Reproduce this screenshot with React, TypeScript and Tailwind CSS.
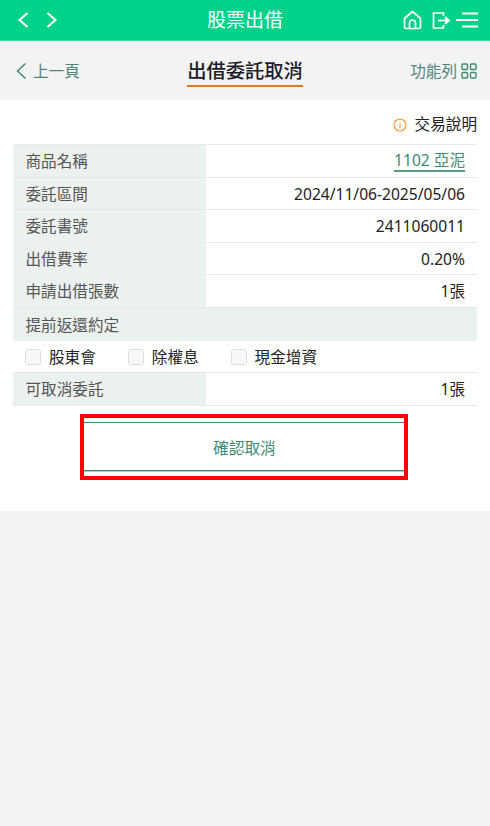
const font = { fontFamily: '"Noto Sans", "Noto Sans CJK TC", sans-serif' };

function Row({ label, value, link }: { label: string; value: string; link?: boolean }) {
  return (
    <div className="flex h-[32.6px] border-b border-[#e8e8e8]">
      <div className="flex w-[193px] items-center bg-[#ebf1ef] pl-[12.5px] pt-[2px] text-[#555]">{label}</div>
      <div className="flex flex-1 items-center justify-end pr-3 pt-[2px] text-[#222]">
        {link ? (
          <span className="border-b-2 border-[#5a9a85] leading-[19px] text-[#3e8a72]">{value}</span>
        ) : (
          value
        )}
      </div>
    </div>
  );
}

function Check({ label }: { label: string }) {
  return (
    <div className="flex items-center">
      <span className="mr-[8px] h-[16px] w-[16px] rounded-[3px] border border-[#ddd] bg-[#f8f8f8]" />
      <span className="text-[#222]">{label}</span>
    </div>
  );
}

export default function App() {
  return (
    <div className="flex h-[826px] w-[490px] flex-col bg-[#f3f3f3] text-[15.6px]" style={font}>
      <div className="flex h-[41px] items-center justify-between border-b border-[#3ddc9f] bg-[#00d28a] pl-[17px] pr-[12px] text-white">
        <div className="flex w-[100px] items-center gap-[15px]">
          <svg width="13" height="18" viewBox="0 0 13 18" fill="none" stroke="white" strokeWidth="2">
            <path d="M10.5 2 2.5 9l8 7" />
          </svg>
          <svg width="13" height="18" viewBox="0 0 13 18" fill="none" stroke="white" strokeWidth="2">
            <path d="M2.5 2l8 7-8 7" />
          </svg>
        </div>
        <div className="pr-[5px] text-[19px]">股票出借</div>
        <div className="flex w-[100px] items-center justify-end gap-[10px]">
          <svg width="19" height="20" viewBox="0 0 19 20" fill="none" stroke="white" strokeWidth="1.7">
            <path d="M1.5 8.5 9.5 1.5l8 7v8.5a1.5 1.5 0 0 1-1.5 1.5H3A1.5 1.5 0 0 1 1.5 17z" />
            <path d="M6.5 18v-5a3 3 0 0 1 6 0v5" />
          </svg>
          <svg width="18" height="18" viewBox="0 0 18 18" fill="none" stroke="white" strokeWidth="1.7">
            <path d="M11.5 5V2H1.5v15h10v-3" />
            <path d="M6 9.5h10" />
            <path d="M13 6l4 3.5-4 3.5" fill="white" />
          </svg>
          <svg className="-ml-[4px]" width="22" height="16" viewBox="0 0 22 16" fill="none" stroke="white" strokeWidth="1.8">
            <path d="M6 1.5h16M0 8h22M6 14.5h16" />
          </svg>
        </div>
      </div>

      <div className="flex h-[59px] items-center justify-between pl-[16px] pr-[13px] pt-[2px]">
        <div className="flex w-[110px] items-center gap-[6px] text-[#54857a]">
          <svg width="11" height="18" viewBox="0 0 11 18" fill="none" stroke="#3e8a72" strokeWidth="1.5">
            <path d="M9.5 1.5 1.5 9l8 7.5" />
          </svg>
          <span>上一頁</span>
        </div>
        <div className="border-b-2 border-[#e07b1f] text-[19.3px] leading-[28px] font-medium text-[#1c1c28]">
          出借委託取消
        </div>
        <div className="flex w-[113px] items-center justify-end gap-[4px] text-[#54857a]">
          <span>功能列</span>
          <svg width="16" height="16" viewBox="0 0 16 16" fill="none" stroke="#3e8a72" strokeWidth="1.4">
            <rect x="1" y="1" width="5.5" height="5.5" rx="1" />
            <rect x="9.5" y="1" width="5.5" height="5.5" rx="1" />
            <rect x="1" y="9.5" width="5.5" height="5.5" rx="1" />
            <rect x="9.5" y="9.5" width="5.5" height="5.5" rx="1" />
          </svg>
        </div>
      </div>

      <div className="h-[411px] bg-white px-[13px]">
        <div className="flex h-[44px] items-center justify-end gap-[8px] pt-[5px] text-[#222]">
          <svg width="14" height="14" viewBox="0 0 14 14" fill="none" stroke="#f29a3a" strokeWidth="1.2">
            <circle cx="7" cy="7" r="6" />
            <path d="M7 3.5v1M7 6v4.5" />
          </svg>
          <span>交易說明</span>
        </div>
        <div className="border-t border-[#e8e8e8]">
          <Row label="商品名稱" value="1102 亞泥" link />
          <Row label="委託區間" value="2024/11/06-2025/05/06" />
          <Row label="委託書號" value="2411060011" />
          <Row label="出借費率" value="0.20%" />
          <Row label="申請出借張數" value="1張" />
          <div className="flex h-[33px] items-center bg-[#ebf1ef] pl-[12.5px] pt-[2px] text-[#555]">提前返還約定</div>
          <div className="flex h-[32px] items-center gap-[32px] border-b border-[#e8e8e8] pl-[12px] pt-[2px]">
            <Check label="股東會" />
            <Check label="除權息" />
            <Check label="現金增資" />
          </div>
          <Row label="可取消委託" value="1張" />
        </div>
        <div className="mt-[8px] flex justify-center pr-[2px]">
          <div className="h-[66px] w-[328px] border-[4px] border-[#ff0000] pb-[5px] pt-[4px]">
            <div className="flex h-[49px] items-center justify-center border-y border-[#3e8a72] pl-[1px] pt-[6px] text-[#3e8a72] shadow-[0_1px_0_#b5cfc6]">
              確認取消
            </div>
          </div>
        </div>
      </div>
    </div>
  );
}
